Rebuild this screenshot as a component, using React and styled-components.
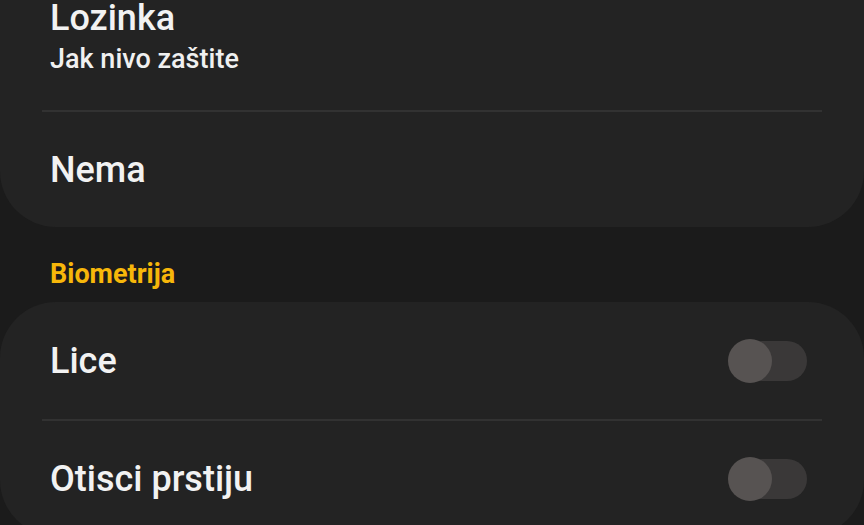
import React from "react";
import styled, { createGlobalStyle } from "styled-components";

const GlobalStyle = createGlobalStyle`
  html, body {
    margin: 0;
    padding: 0;
    background: #1b1b1b;
    overflow: hidden;
    font-family: Roboto, "Noto Sans", sans-serif;
  }
`;

const Page = styled.div`
  width: 864px;
  height: 525px;
  overflow: hidden;
  background: #1b1b1b;
`;

const Sheet = styled.div`
  margin-top: -60px;
  display: flex;
  flex-direction: column;
`;

const Card = styled.section`
  background: #232323;
  border-radius: 56px;
  padding: 0 42px;
  display: flex;
  flex-direction: column;
`;

const Row = styled.div`
  display: flex;
  align-items: center;
  justify-content: space-between;
  min-height: ${props => props.$height || 117}px;
  padding: ${props => props.$padding || "0"};
  box-sizing: border-box;
  border-top: ${props => (props.$divider ? "2px solid #323232" : "none")};
`;

const TextBlock = styled.div`
  display: flex;
  flex-direction: column;
  padding-left: 8px;
  gap: 5px;
`;

const Title = styled.div`
  color: #f2f2f2;
  font-size: 36px;
  line-height: 40px;
  font-weight: 500;
`;

const Subtitle = styled.div`
  color: #f0f0f0;
  font-size: 27px;
  line-height: 32px;
  font-weight: 500;
`;

const SectionHeader = styled.h2`
  margin: 31px 0 12px;
  padding-left: 50px;
  color: #f7b70a;
  font-size: 27px;
  line-height: 32px;
  font-weight: 700;
`;

const Track = styled.div`
  position: relative;
  width: 79px;
  height: 44px;
  margin-right: 15px;
  display: flex;
  align-items: center;
  &::before {
    content: "";
    position: absolute;
    left: 14px;
    right: 0;
    top: 2px;
    bottom: 2px;
    border-radius: 20px;
    background: #3a3838;
  }
`;

const Thumb = styled.div`
  position: relative;
  width: 44px;
  height: 44px;
  border-radius: 50%;
  background: #575352;
`;

const Toggle = () => (
  <Track>
    <Thumb />
  </Track>
);

export default function App() {
  return (
    <Page>
      <GlobalStyle />
      <Sheet>
        <Card>
          <Row $height={170} $padding="57px 0 34px">
            <TextBlock>
              <Title>Lozinka</Title>
              <Subtitle>Jak nivo zaštite</Subtitle>
            </TextBlock>
          </Row>
          <Row $divider>
            <TextBlock>
              <Title>Nema</Title>
            </TextBlock>
          </Row>
        </Card>
        <SectionHeader>Biometrija</SectionHeader>
        <Card>
          <Row>
            <TextBlock>
              <Title>Lice</Title>
            </TextBlock>
            <Toggle />
          </Row>
          <Row $divider>
            <TextBlock>
              <Title>Otisci prstiju</Title>
            </TextBlock>
            <Toggle />
          </Row>
        </Card>
      </Sheet>
    </Page>
  );
}
